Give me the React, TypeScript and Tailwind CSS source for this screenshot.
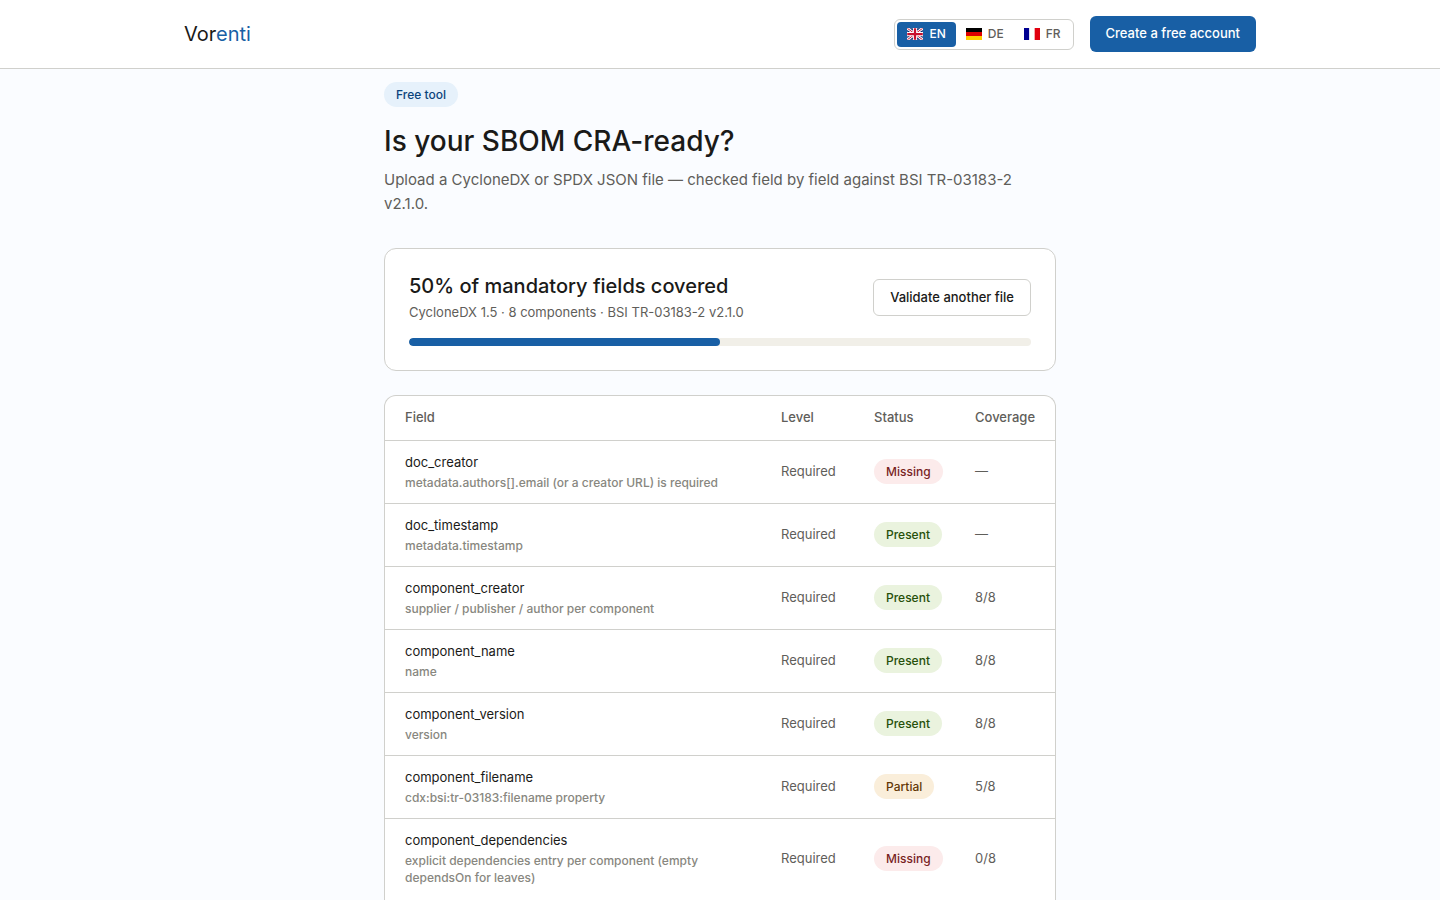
import { useState } from 'react';

type Status = 'missing' | 'present' | 'partial';

type FieldResult = {
  name: string;
  hint: string;
  status: Status;
  coverage: string;
};

const RESULTS: FieldResult[] = [
  {
    name: 'doc_creator',
    hint: 'metadata.authors[].email (or a creator URL) is required',
    status: 'missing',
    coverage: '—',
  },
  { name: 'doc_timestamp', hint: 'metadata.timestamp', status: 'present', coverage: '—' },
  {
    name: 'component_creator',
    hint: 'supplier / publisher / author per component',
    status: 'present',
    coverage: '8/8',
  },
  { name: 'component_name', hint: 'name', status: 'present', coverage: '8/8' },
  { name: 'component_version', hint: 'version', status: 'present', coverage: '8/8' },
  {
    name: 'component_filename',
    hint: 'cdx:bsi:tr-03183:filename property',
    status: 'partial',
    coverage: '5/8',
  },
  {
    name: 'component_dependencies',
    hint: 'explicit dependencies entry per component (empty dependsOn for leaves)',
    status: 'missing',
    coverage: '0/8',
  },
];

const STATUS_LABEL: Record<Status, string> = {
  missing: 'Missing',
  present: 'Present',
  partial: 'Partial',
};

const STATUS_CLASS: Record<Status, string> = {
  missing: 'bg-[#fcebeb] text-[#791f1f]',
  present: 'bg-[#eaf3de] text-[#27500a]',
  partial: 'bg-[#faeeda] text-[#633806]',
};

const pillClass = 'inline-block rounded-full px-3 py-1 text-xs leading-[17px] font-medium';

function FlagGB() {
  return (
    <svg viewBox="0 0 64 48" className="h-3 w-4" aria-hidden="true">
      <path fill="#012169" d="M0 0h64v48H0z" />
      <path stroke="#fff" strokeWidth="11" d="M0 0l64 48M64 0L0 48" />
      <path stroke="#c8102e" strokeWidth="4" d="M0 0l64 48M64 0L0 48" />
      <path stroke="#fff" strokeWidth="17" d="M32 0v48M0 24h64" />
      <path stroke="#c8102e" strokeWidth="9" d="M32 0v48M0 24h64" />
      <path stroke="#fff" strokeOpacity="0.5" strokeWidth="4" fill="none" d="M0 0h64v48H0z" />
    </svg>
  );
}

function FlagDE() {
  return (
    <svg viewBox="0 0 16 12" className="h-3 w-4" aria-hidden="true">
      <path fill="#000" d="M0 0h16v4H0z" />
      <path fill="#d00" d="M0 4h16v4H0z" />
      <path fill="#ffce00" d="M0 8h16v4H0z" />
    </svg>
  );
}

function FlagFR() {
  return (
    <svg viewBox="0 0 15 12" preserveAspectRatio="none" className="h-3 w-4" aria-hidden="true">
      <path fill="#000091" d="M0 0h5v12H0z" />
      <path fill="#fff" d="M5 0h5v12H5z" />
      <path fill="#e1000f" d="M10 0h5v12h-5z" />
    </svg>
  );
}

const LANGUAGES = [
  { code: 'EN', Flag: FlagGB },
  { code: 'DE', Flag: FlagDE },
  { code: 'FR', Flag: FlagFR },
];

function LanguageSwitch() {
  const [active, setActive] = useState('EN');

  return (
    <div
      role="group"
      aria-label="Language"
      className="flex rounded-md border border-[#d0d0cc] bg-white p-0.5"
    >
      {LANGUAGES.map(({ code, Flag }) => (
        <button
          key={code}
          type="button"
          aria-pressed={active === code}
          onClick={() => setActive(code)}
          className={`flex h-[25px] items-center gap-1.5 rounded px-2.5 text-xs font-medium ${
            active === code ? 'bg-[#185fa5] text-white' : 'text-[#5f5e5a]'
          }`}
        >
          <Flag />
          {code}
        </button>
      ))}
    </div>
  );
}

function Header() {
  return (
    <header className="border-b border-[#d0d0cc] bg-white">
      <div className="mx-auto flex h-[68px] max-w-[1120px] items-center justify-between px-6">
        <a href="#" className="text-xl text-[#1a1a18]">
          Vor<span className="text-[#185fa5]">enti</span>
        </a>
        <div className="flex items-center gap-4">
          <LanguageSwitch />
          <a
            href="#"
            className="flex h-9 items-center rounded-md bg-[#185fa5] px-4 text-[13px] font-medium text-white"
          >
            Create a free account
          </a>
        </div>
      </div>
    </header>
  );
}

function Summary({ percent }: { percent: number }) {
  return (
    <section className="mt-8 rounded-xl border border-[#d0d0cc] bg-white p-6">
      <div className="flex items-center justify-between gap-4">
        <div>
          <h2 className="text-xl leading-[26px] font-medium">
            {percent}% of mandatory fields covered
          </h2>
          <p className="mt-1 text-[13px] leading-[19px] text-[#5f5e5a]">
            CycloneDX 1.5 · 8 components · BSI TR-03183-2 v2.1.0
          </p>
        </div>
        <button
          type="button"
          className="h-[37px] rounded-md border border-[#d0d0cc] bg-white px-4 text-[13px] font-medium"
        >
          Validate another file
        </button>
      </div>
      <div
        role="progressbar"
        aria-label="Mandatory fields covered"
        aria-valuenow={percent}
        aria-valuemin={0}
        aria-valuemax={100}
        className="mt-4 h-2 overflow-hidden rounded-full bg-[#f1efe8]"
      >
        <div className="h-full rounded-full bg-[#185fa5]" style={{ width: `${percent}%` }} />
      </div>
    </section>
  );
}

function ResultsTable() {
  return (
    // flex-1 lets the panel run on to the bottom edge of the window
    <section className="mt-6 flex-1 rounded-t-xl border border-b-0 border-[#d0d0cc] bg-white">
      <table className="w-full table-fixed text-left text-[13px] leading-[19px] text-[#5f5e5a]">
        <thead>
          <tr className="h-11 border-b border-[#d0d0cc]">
            <th scope="col" className="px-5 font-medium">
              Field
            </th>
            <th scope="col" className="w-[93px] pl-5 font-medium">
              Level
            </th>
            <th scope="col" className="w-[101px] pl-5 font-medium">
              Status
            </th>
            <th scope="col" className="w-[100px] pl-5 font-medium">
              Coverage
            </th>
          </tr>
        </thead>
        <tbody>
          {RESULTS.map((row) => (
            <tr key={row.name} className="border-b border-[#d0d0cc] last:border-b-0">
              <td className="px-5 py-3">
                <div className="text-[#1a1a18]">{row.name}</div>
                <div className="mt-0.5 text-xs leading-[17px] font-medium text-[#888780]">
                  {row.hint}
                </div>
              </td>
              <td className="pl-5">Required</td>
              <td className="pl-5">
                <span className={`${pillClass} ${STATUS_CLASS[row.status]}`}>
                  {STATUS_LABEL[row.status]}
                </span>
              </td>
              <td className="pl-5">{row.coverage}</td>
            </tr>
          ))}
        </tbody>
      </table>
    </section>
  );
}

export default function App() {
  return (
    <div className="flex min-h-screen flex-col bg-[#fafcff] font-['Inter',sans-serif] text-[#1a1a18]">
      <Header />
      <main className="mx-auto flex w-full max-w-[720px] flex-1 flex-col px-6 pt-[13px]">
        <div className="flex">
          <span className={`${pillClass} bg-[#e6f1fb] text-[#0c447c]`}>Free tool</span>
        </div>
        <h1 className="mt-4 text-[28px] leading-[37px] font-medium">Is your SBOM CRA-ready?</h1>
        <p className="mt-2 text-[15px] leading-6 text-[#5f5e5a]">
          Upload a CycloneDX or SPDX JSON file — checked field by field against BSI TR-03183-2
          v2.1.0.
        </p>
        <Summary percent={50} />
        <ResultsTable />
      </main>
    </div>
  );
}
